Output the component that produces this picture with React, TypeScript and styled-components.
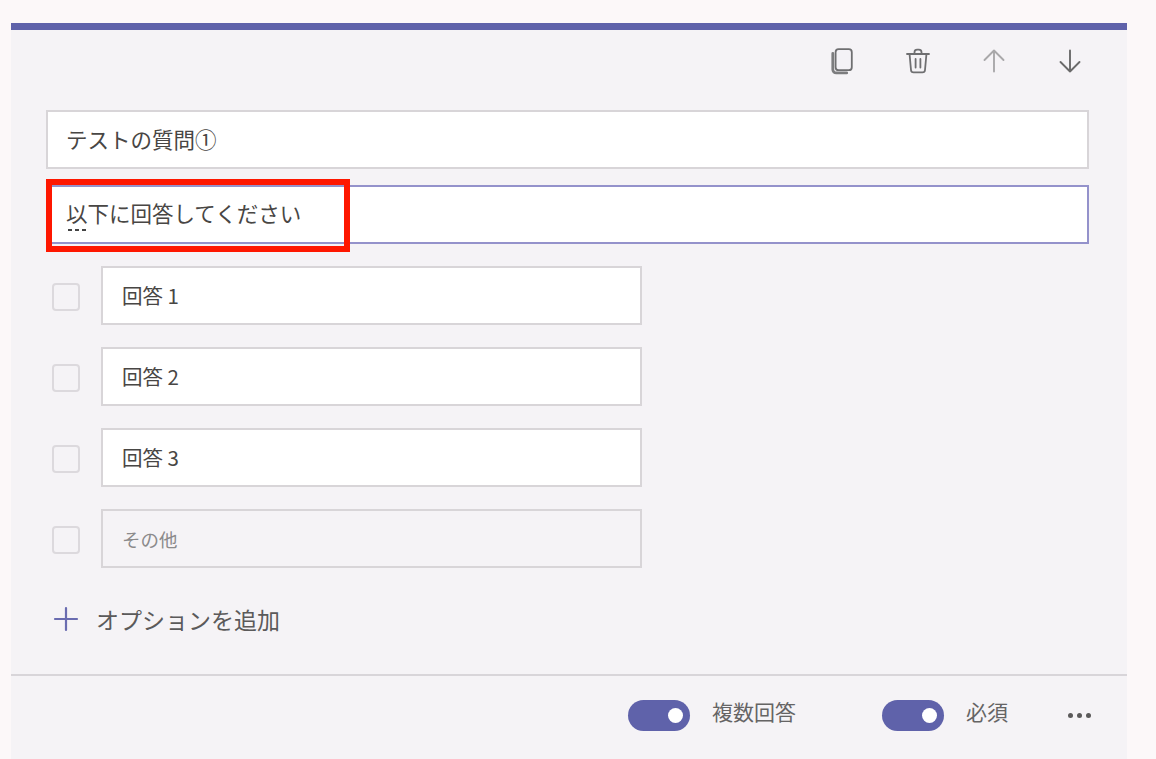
import { createGlobalStyle, styled } from 'styled-components'

const GlobalStyle = createGlobalStyle`
  html, body {
    margin: 0;
    padding: 0;
    height: 100%;
    overflow: hidden;
    background: #fcf8f9;
  }
  body {
    font-family: "Noto Sans CJK JP", "Noto Sans", sans-serif;
    color: #484644;
  }
`

const options = ['回答 1', '回答 2', '回答 3']

const CopyIcon = () => (
  <svg width="24" height="27" viewBox="0 0 24 27" fill="none">
    <path d="M2.8 5.5v16a3.4 3.4 0 0 0 3.4 3.4h10.5" stroke="#7c7c7e" strokeWidth="2.8" strokeLinecap="round" />
    <rect x="5.6" y="1.2" width="16.2" height="21" rx="3" fill="#f4f2f6" stroke="#6f6f71" strokeWidth="1.8" />
  </svg>
)

const TrashIcon = () => (
  <svg width="26" height="26" viewBox="0 0 26 26" fill="none" stroke="#6f6f71" strokeWidth="1.8" strokeLinecap="round" strokeLinejoin="round">
    <path d="M2 6h22" />
    <path d="M9.5 5.5V4a2.6 2.6 0 0 1 2.6-2.4h1.8A2.6 2.6 0 0 1 16.5 4v1.5" />
    <path d="M4.6 6.5 6 22a2.6 2.6 0 0 0 2.6 2.4h8.8A2.6 2.6 0 0 0 20 22l1.4-15.5" />
    <path d="M10.6 11v8.5M15.4 11v8.5" />
  </svg>
)

const ArrowIcon = ({ up, color }: { up?: boolean; color: string }) => (
  <svg width="22" height="24" viewBox="0 0 22 24" fill="none" stroke={color} strokeWidth="1.9" strokeLinecap="round" strokeLinejoin="round">
    {up ? <path d="M11 22.5V1.5M1.5 11 11 1.5l9.5 9.5" /> : <path d="M11 1.5v21M1.5 13l9.5 9.5 9.5-9.5" />}
  </svg>
)

const App = () => {
  return (
    <>
      <GlobalStyle />
      <StyledPage>
        <StyledCard>
          <StyledActions>
            <StyledActionSlot><CopyIcon /></StyledActionSlot>
            <StyledActionSlot><TrashIcon /></StyledActionSlot>
            <StyledActionSlot><ArrowIcon up color="#a9a8aa" /></StyledActionSlot>
            <StyledActionSlot><ArrowIcon color="#6a6a6a" /></StyledActionSlot>
          </StyledActions>

          <StyledBody>
            <StyledField>テストの質問①</StyledField>
            <StyledField $focused>
              <StyledSubtitleText>
                <StyledSpellMark>以</StyledSpellMark>下に回答してください
              </StyledSubtitleText>
              <StyledHighlight />
            </StyledField>

            <StyledOptions>
              {options.map((option) => (
                <StyledOptionRow key={option}>
                  <StyledCheckbox />
                  <StyledOptionField>{option}</StyledOptionField>
                </StyledOptionRow>
              ))}
              <StyledOptionRow>
                <StyledCheckbox />
                <StyledOptionField $muted>その他</StyledOptionField>
              </StyledOptionRow>
            </StyledOptions>

            <StyledAddOption>
              <svg width="26" height="26" viewBox="0 0 26 26" fill="none" stroke="#6a6cb0" strokeWidth="2.2" strokeLinecap="round">
                <path d="M13 2v22M2 13h22" />
              </svg>
              <span>オプションを追加</span>
            </StyledAddOption>
          </StyledBody>

          <StyledFooter>
            <StyledToggle />
            <StyledToggleLabel $width={192}>複数回答</StyledToggleLabel>
            <StyledToggle />
            <StyledToggleLabel $width={124}>必須</StyledToggleLabel>
            <StyledDots>
              <i />
              <i />
              <i />
            </StyledDots>
          </StyledFooter>
        </StyledCard>
      </StyledPage>
    </>
  )
}

const StyledPage = styled.div`
  height: 759px;
  padding: 23px 29px 0 11px;
  box-sizing: border-box;
`

const StyledCard = styled.div`
  height: 736px;
  box-sizing: border-box;
  background: #f5f3f6;
  border-top: 7px solid #5f62aa;
  display: flex;
  flex-direction: column;
`

const StyledActions = styled.div`
  height: 80px;
  padding: 12px 19px 0 0;
  box-sizing: border-box;
  display: flex;
  justify-content: flex-end;
  align-items: flex-start;
`

const StyledActionSlot = styled.div`
  width: 76px;
  height: 38px;
  display: flex;
  align-items: center;
  justify-content: center;
`

const StyledBody = styled.div`
  padding: 0 38px 0 35px;
  display: flex;
  flex-direction: column;
  flex: 1;
`

const StyledField = styled.div<{ $focused?: boolean }>`
  position: relative;
  height: 59px;
  box-sizing: border-box;
  margin-bottom: 16px;
  padding: 0 0 2px 18px;
  display: flex;
  align-items: center;
  background: #fff;
  border: 2px solid ${({ $focused }) => ($focused ? '#9492cb' : '#d8d5d8')};
  font-size: 21.5px;
  line-height: 1;
  color: #484644;
`

const StyledSubtitleText = styled.span`
  position: relative;
  top: -1px;
`

const StyledSpellMark = styled.span`
  position: relative;
  &::after {
    content: '';
    position: absolute;
    left: 2px;
    width: 18px;
    bottom: -3px;
    height: 2px;
    background: repeating-linear-gradient(90deg, #444 0 4px, transparent 4px 7px);
  }
`

const StyledHighlight = styled.div`
  position: absolute;
  left: -2px;
  top: -8px;
  width: 304px;
  height: 73px;
  box-sizing: border-box;
  border: 6px solid #fe1700;
  pointer-events: none;
`

const StyledOptions = styled.div`
  margin-top: 6px;
  display: flex;
  flex-direction: column;
  gap: 22px;
`

const StyledOptionRow = styled.div`
  display: flex;
  align-items: center;
  padding-left: 6px;
`

const StyledCheckbox = styled.div`
  width: 28px;
  height: 28px;
  margin-top: 2px;
  box-sizing: border-box;
  border: 2px solid #dcd9dd;
  border-radius: 4px;
  margin-right: 21px;
`

const StyledOptionField = styled.div<{ $muted?: boolean }>`
  width: 541px;
  height: 59px;
  box-sizing: border-box;
  padding-left: 19px;
  padding-bottom: ${({ $muted }) => ($muted ? '0' : '2px')};
  display: flex;
  align-items: center;
  background: ${({ $muted }) => ($muted ? 'transparent' : '#fff')};
  border: 2px solid #d8d5d8;
  font-size: ${({ $muted }) => ($muted ? '18.5px' : '20.5px')};
  color: ${({ $muted }) => ($muted ? '#8b8a8b' : '#484644')};
`

const StyledAddOption = styled.div`
  margin-top: 38px;
  padding-left: 7px;
  display: flex;
  align-items: center;
  gap: 17px;
  font-size: 23px;
  line-height: 26px;
  color: #5b5a5a;
`

const StyledFooter = styled.div`
  height: 85px;
  box-sizing: border-box;
  border-top: 2px solid #d8d5d9;
  padding: 0 35px 5px 617px;
  display: flex;
  align-items: center;
`

const StyledToggle = styled.div`
  position: relative;
  flex: none;
  width: 62px;
  height: 31px;
  border-radius: 16px;
  background: #5f62aa;
  &::after {
    content: '';
    position: absolute;
    right: 7px;
    top: 8px;
    width: 15px;
    height: 15px;
    border-radius: 50%;
    background: #fff;
  }
`

const StyledToggleLabel = styled.div<{ $width: number }>`
  flex: none;
  width: ${({ $width }) => $width}px;
  box-sizing: border-box;
  padding-left: 22px;
  font-size: 21px;
  line-height: 26px;
  white-space: nowrap;
  color: #656464;
  position: relative;
  top: -4px;
`

const StyledDots = styled.div`
  display: flex;
  gap: 4px;
  i {
    width: 5px;
    height: 5px;
    border-radius: 50%;
    background: #5b5a5a;
  }
`

export default App
